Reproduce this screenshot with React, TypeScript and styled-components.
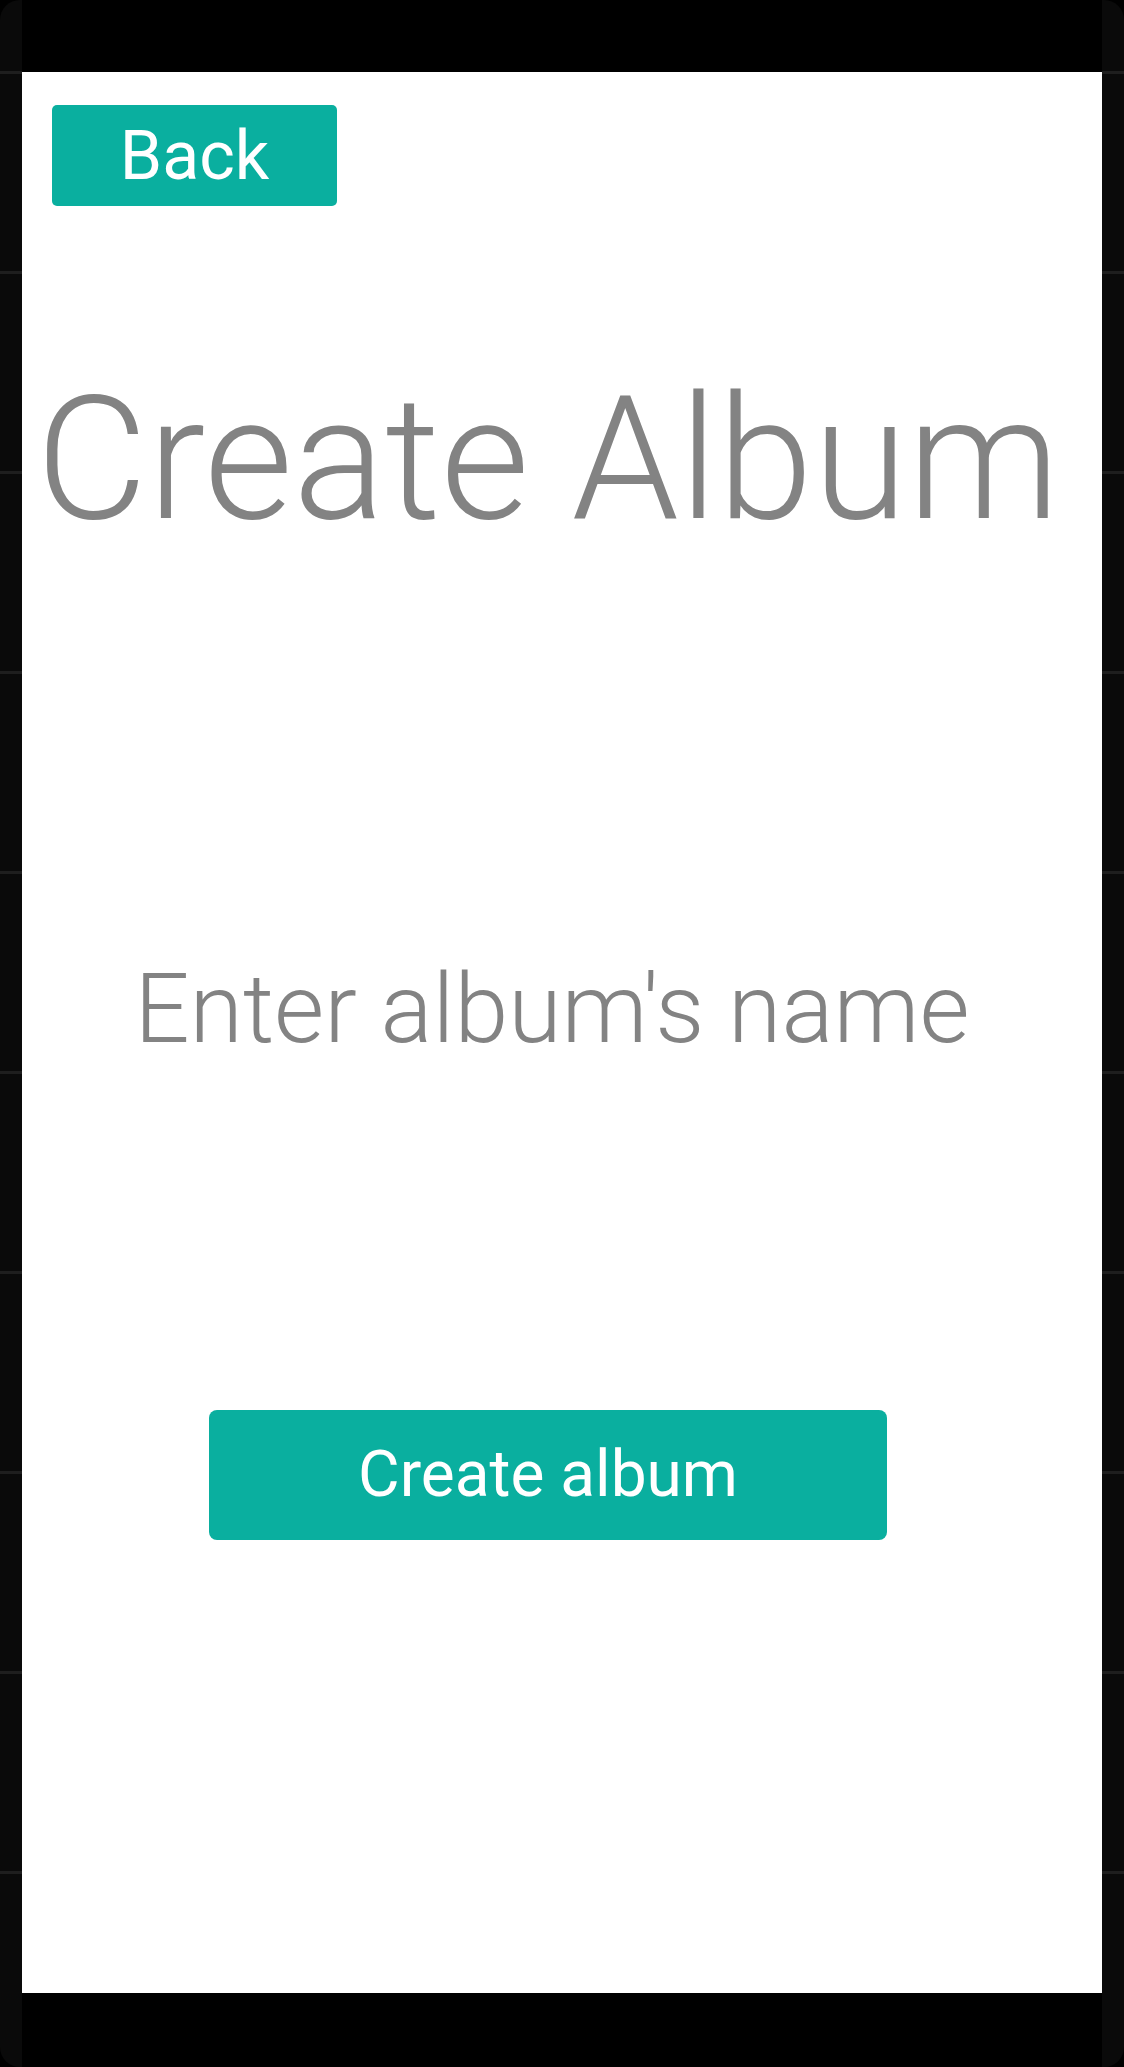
import React from "react";
import styled, { createGlobalStyle } from "styled-components";

const Global = createGlobalStyle`
  html, body { margin: 0; padding: 0; background: #000; }
  body { font-family: Roboto, "Noto Sans", "Liberation Sans", sans-serif; }
  * { box-sizing: border-box; }
`;

const Frame = styled.div`
  display: flex;
  width: 1124px;
  height: 2067px;
  background: #000;
`;

const Rail = styled.div<{ $side: "left" | "right" }>`
  width: 22px;
  flex: none;
  background-color: #0a0a0a;
  background-image: repeating-linear-gradient(
    to bottom,
    transparent 0px,
    transparent 71px,
    #1e1e1e 71px,
    #1e1e1e 74px,
    transparent 74px,
    transparent 200px
  );
  border-radius: ${(p) => (p.$side === "left" ? "20px 0 0 20px" : "0 20px 20px 0")};
`;

const Screen = styled.div`
  flex: 1;
  display: flex;
  flex-direction: column;
`;

const Bar = styled.div<{ $h: number }>`
  height: ${(p) => p.$h}px;
  flex: none;
  background: #000;
`;

const Content = styled.main`
  flex: 1;
  background: #fff;
  display: flex;
  flex-direction: column;
  padding: 33px 28px 0 30px;
`;

const BackButton = styled.button`
  align-self: flex-start;
  width: 285px;
  height: 101px;
  border: none;
  border-radius: 5px;
  background: #0aaf9f;
  color: #fff;
  font-family: Roboto, "Noto Sans", sans-serif;
  font-size: 68px;
  font-weight: 400;
  line-height: 1;
  padding: 0;
  display: flex;
  align-items: center;
  justify-content: center;
  cursor: pointer;
`;

const Center = styled.div`
  display: flex;
  flex-direction: column;
  align-items: center;
  margin-left: -30px;
`;

const Title = styled.h1`
  margin: 167px 0 0;
  font-family: Roboto, "Noto Sans", sans-serif;
  font-weight: 300;
  font-size: 172px;
  line-height: 1;
  color: #838383;
  white-space: nowrap;
`;

const NameInput = styled.input`
  margin-top: 415px;
  width: 100%;
  height: 97px;
  border: none;
  outline: none;
  background: transparent;
  text-align: center;
  font-family: Roboto, "Noto Sans", sans-serif;
  font-weight: 300;
  font-size: 97px;
  line-height: 1;
  padding: 0 0 0 8px;
  color: #838383;
  &::placeholder {
    color: #838383;
    opacity: 1;
  }
`;

const CreateButton = styled.button`
  margin-top: 353px;
  width: 678px;
  height: 130px;
  border: none;
  border-radius: 8px;
  background: #0aaf9f;
  color: #fff;
  font-family: Roboto, "Noto Sans", sans-serif;
  font-size: 64px;
  font-weight: 400;
  line-height: 1;
  padding: 0;
  cursor: pointer;
`;

export default function App() {
  return (
    <>
      <Global />
      <Frame>
        <Rail $side="left" />
        <Screen>
          <Bar $h={72} />
          <Content>
            <BackButton>Back</BackButton>
            <Center>
              <Title>Create Album</Title>
              <NameInput placeholder="Enter album's name" />
              <CreateButton>Create album</CreateButton>
            </Center>
          </Content>
          <Bar $h={74} />
        </Screen>
        <Rail $side="right" />
      </Frame>
    </>
  );
}
